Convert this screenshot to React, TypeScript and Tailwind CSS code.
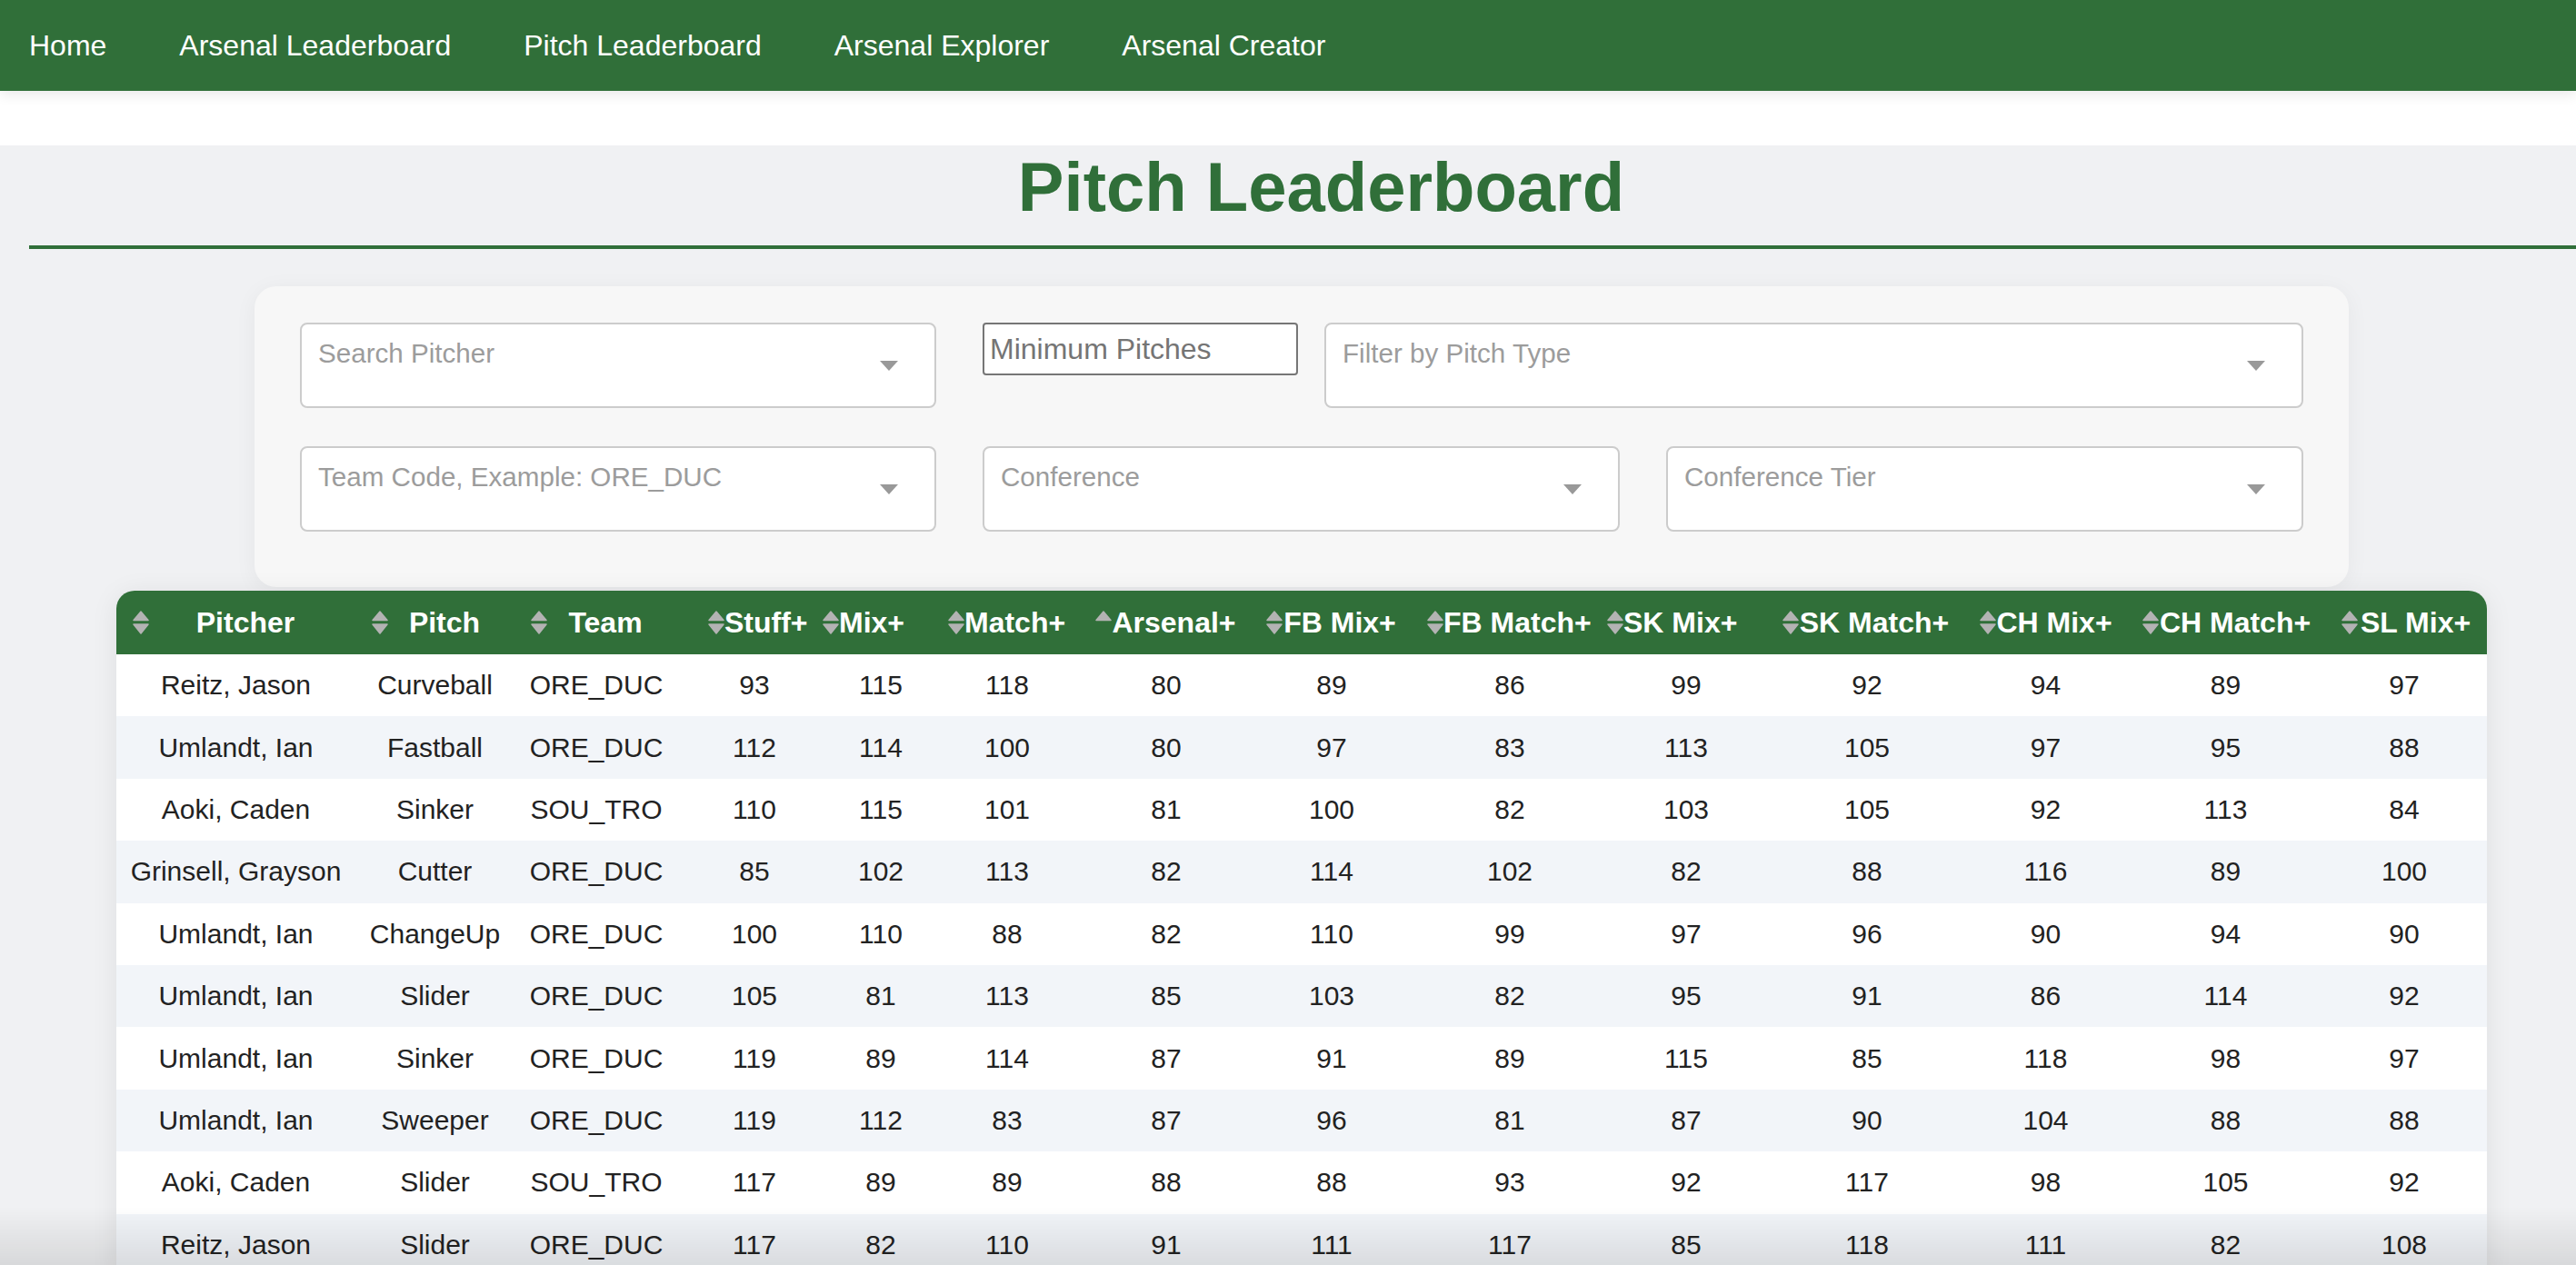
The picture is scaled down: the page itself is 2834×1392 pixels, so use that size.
import React from "react";

const rows: (string | number)[][] = [
  ["Reitz, Jason", "Curveball", "ORE_DUC", 93, 115, 118, 80, 89, 86, 99, 92, 94, 89, 97],
  ["Umlandt, Ian", "Fastball", "ORE_DUC", 112, 114, 100, 80, 97, 83, 113, 105, 97, 95, 88],
  ["Aoki, Caden", "Sinker", "SOU_TRO", 110, 115, 101, 81, 100, 82, 103, 105, 92, 113, 84],
  ["Grinsell, Grayson", "Cutter", "ORE_DUC", 85, 102, 113, 82, 114, 102, 82, 88, 116, 89, 100],
  ["Umlandt, Ian", "ChangeUp", "ORE_DUC", 100, 110, 88, 82, 110, 99, 97, 96, 90, 94, 90],
  ["Umlandt, Ian", "Slider", "ORE_DUC", 105, 81, 113, 85, 103, 82, 95, 91, 86, 114, 92],
  ["Umlandt, Ian", "Sinker", "ORE_DUC", 119, 89, 114, 87, 91, 89, 115, 85, 118, 98, 97],
  ["Umlandt, Ian", "Sweeper", "ORE_DUC", 119, 112, 83, 87, 96, 81, 87, 90, 104, 88, 88],
  ["Aoki, Caden", "Slider", "SOU_TRO", 117, 89, 89, 88, 88, 93, 92, 117, 98, 105, 92],
  ["Reitz, Jason", "Slider", "ORE_DUC", 117, 82, 110, 91, 111, 117, 85, 118, 111, 82, 108],
];

type Col = { label: string; w: string; thPr: string; td: string; sort: "both" | "up" };

const headers: Col[] = [
  { label: "Pitcher", w: "w-[263px]", thPr: "pr-[15px]", td: "", sort: "both" },
  { label: "Pitch", w: "w-[175px]", thPr: "pr-[15px]", td: "", sort: "both" },
  { label: "Team", w: "w-[195px]", thPr: "pr-[31px]", td: "pr-[15px]", sort: "both" },
  { label: "Stuff+", w: "w-[126px]", thPr: "pr-[15px]", td: "pl-[12px]", sort: "both" },
  { label: "Mix+", w: "w-[138px]", thPr: "pr-[34px]", td: "pl-[26px]", sort: "both" },
  { label: "Match+", w: "w-[162px]", thPr: "pr-[15px]", td: "pl-[4px]", sort: "both" },
  { label: "Arsenal+", w: "w-[188px]", thPr: "pr-[15px]", td: "pl-[4px]", sort: "up" },
  { label: "FB Mix+", w: "w-[177px]", thPr: "pr-[15px]", td: "pl-[3px]", sort: "both" },
  { label: "FB Match+", w: "w-[198px]", thPr: "pr-[15px]", td: "pl-[20px]", sort: "both" },
  { label: "SK Mix+", w: "w-[193px]", thPr: "pr-[32px]", td: "pl-[17px]", sort: "both" },
  { label: "SK Match+", w: "w-[217px]", thPr: "pr-[15px]", td: "pl-[5px]", sort: "both" },
  { label: "CH Mix+", w: "w-[179px]", thPr: "pr-[15px]", td: "pl-[2px]", sort: "both" },
  { label: "CH Match+", w: "w-[219px]", thPr: "pr-[15px]", td: "", sort: "both" },
  { label: "SL Mix+", w: "w-[178px]", thPr: "pr-[15px]", td: "pr-[4px]", sort: "both" },
];

function SortIcon({ mode }: { mode: "both" | "up" }) {
  return (
    <svg width="18" height="26" viewBox="0 0 18 26" className="block shrink-0">
      <path
        d="M9 1 L17 10.5 L1 10.5 Z"
        fill="#b3b3b3"
        stroke="#b3b3b3"
        strokeWidth="1.5"
        strokeLinejoin="round"
      />
      {mode === "both" && (
        <path
          d="M1 15 L17 15 L9 25 Z"
          fill="#b3b3b3"
          stroke="#b3b3b3"
          strokeWidth="1.5"
          strokeLinejoin="round"
        />
      )}
    </svg>
  );
}

function Arrow() {
  return (
    <svg width="20" height="11" viewBox="0 0 20 11" className="block">
      <path d="M0 0 L20 0 L10 11 Z" fill="#999999" />
    </svg>
  );
}

function SelectBox({ placeholder, w }: { placeholder: string; w: string }) {
  return (
    <div
      className={`${w} h-[94px] shrink-0 bg-white border-2 border-[#cccccc] rounded-[8px] relative pl-[18px] pt-[15px]`}
    >
      <div className="text-[29.6px] leading-[34px] text-[#9c9c9c]">{placeholder}</div>
      <div className="absolute right-[40px] top-[40px]">
        <Arrow />
      </div>
    </div>
  );
}

export default function App() {
  return (
    <div className="min-h-screen w-full overflow-x-hidden bg-white font-['Liberation_Sans',Arial,sans-serif]">
      <nav className="relative z-10 h-[100px] bg-[#306f39] flex items-center gap-[80px] pl-[32px] shadow-[0_4px_14px_rgba(0,0,0,0.09)]">
        {["Home", "Arsenal Leaderboard", "Pitch Leaderboard", "Arsenal Explorer", "Arsenal Creator"].map(
          (t) => (
            <span key={t} className="text-white text-[32px] leading-[37px]">
              {t}
            </span>
          )
        )}
      </nav>
      <div className="h-[60px] bg-white" />
      <main className="bg-[#f0f1f3] min-h-[1232px]">
        <div className="ml-[32px] w-full pl-[9px] pt-[2px] pb-[21px] border-b-4 border-[#306f39] text-center">
          <h1 className="text-[76px] leading-[87px] font-bold text-[#306f39]">Pitch Leaderboard</h1>
        </div>

        <div className="ml-[280px] mt-[41px] w-[2304px] h-[331px] bg-[#f7f7f7] rounded-[24px] shadow-[0_4px_24px_rgba(0,0,0,0.05)] pt-[40px] pl-[50px]">
          <div className="flex items-start">
            <SelectBox placeholder="Search Pitcher" w="w-[700px]" />
            <div className="ml-[51px] w-[347px] h-[58px] shrink-0 bg-white border-2 border-[#767676] rounded-[4px] flex items-center pl-[6px]">
              <span className="text-[32px] leading-[37px] text-[#757575]">Minimum Pitches</span>
            </div>
            <div className="ml-[29px]">
              <SelectBox placeholder="Filter by Pitch Type" w="w-[1077px]" />
            </div>
          </div>
          <div className="flex items-start mt-[42px] gap-[51px]">
            <SelectBox placeholder="Team Code, Example: ORE_DUC" w="w-[700px]" />
            <SelectBox placeholder="Conference" w="w-[701px]" />
            <SelectBox placeholder="Conference Tier" w="w-[701px]" />
          </div>
        </div>

        <div className="ml-[128px] mt-[4px] w-[2608px] rounded-t-[20px] overflow-hidden shadow-[0_4px_30px_rgba(0,0,0,0.08)]">
          <table className="table-fixed w-[2608px] border-collapse">
            <colgroup>
              {headers.map((h) => (
                <col key={h.label} className={h.w} />
              ))}
            </colgroup>
            <thead>
              <tr className="h-[70px] bg-[#306f39]">
                {headers.map((h) => (
                  <th
                    key={h.label}
                    className={`p-0 pl-[18px] ${h.thPr} text-white text-[32px] font-bold whitespace-nowrap`}
                  >
                    <div className="flex items-center">
                      <SortIcon mode={h.sort} />
                      <span className="flex-1 text-center leading-[37px]">{h.label}</span>
                    </div>
                  </th>
                ))}
              </tr>
            </thead>
            <tbody>
              {rows.map((r, i) => (
                <tr key={i} className={`h-[68.4px] ${i % 2 === 0 ? "bg-white" : "bg-[#f2f5f9]"}`}>
                  {r.map((c, j) => (
                    <td
                      key={j}
                      className={`p-0 ${headers[j].td} text-center text-[30px] leading-[34px] text-[#222222] whitespace-nowrap`}
                    >
                      {c}
                    </td>
                  ))}
                </tr>
              ))}
            </tbody>
          </table>
        </div>
      </main>
      <div className="pointer-events-none fixed left-0 right-0 bottom-0 h-[64px] bg-linear-to-b from-transparent to-black/10" />
    </div>
  );
}
